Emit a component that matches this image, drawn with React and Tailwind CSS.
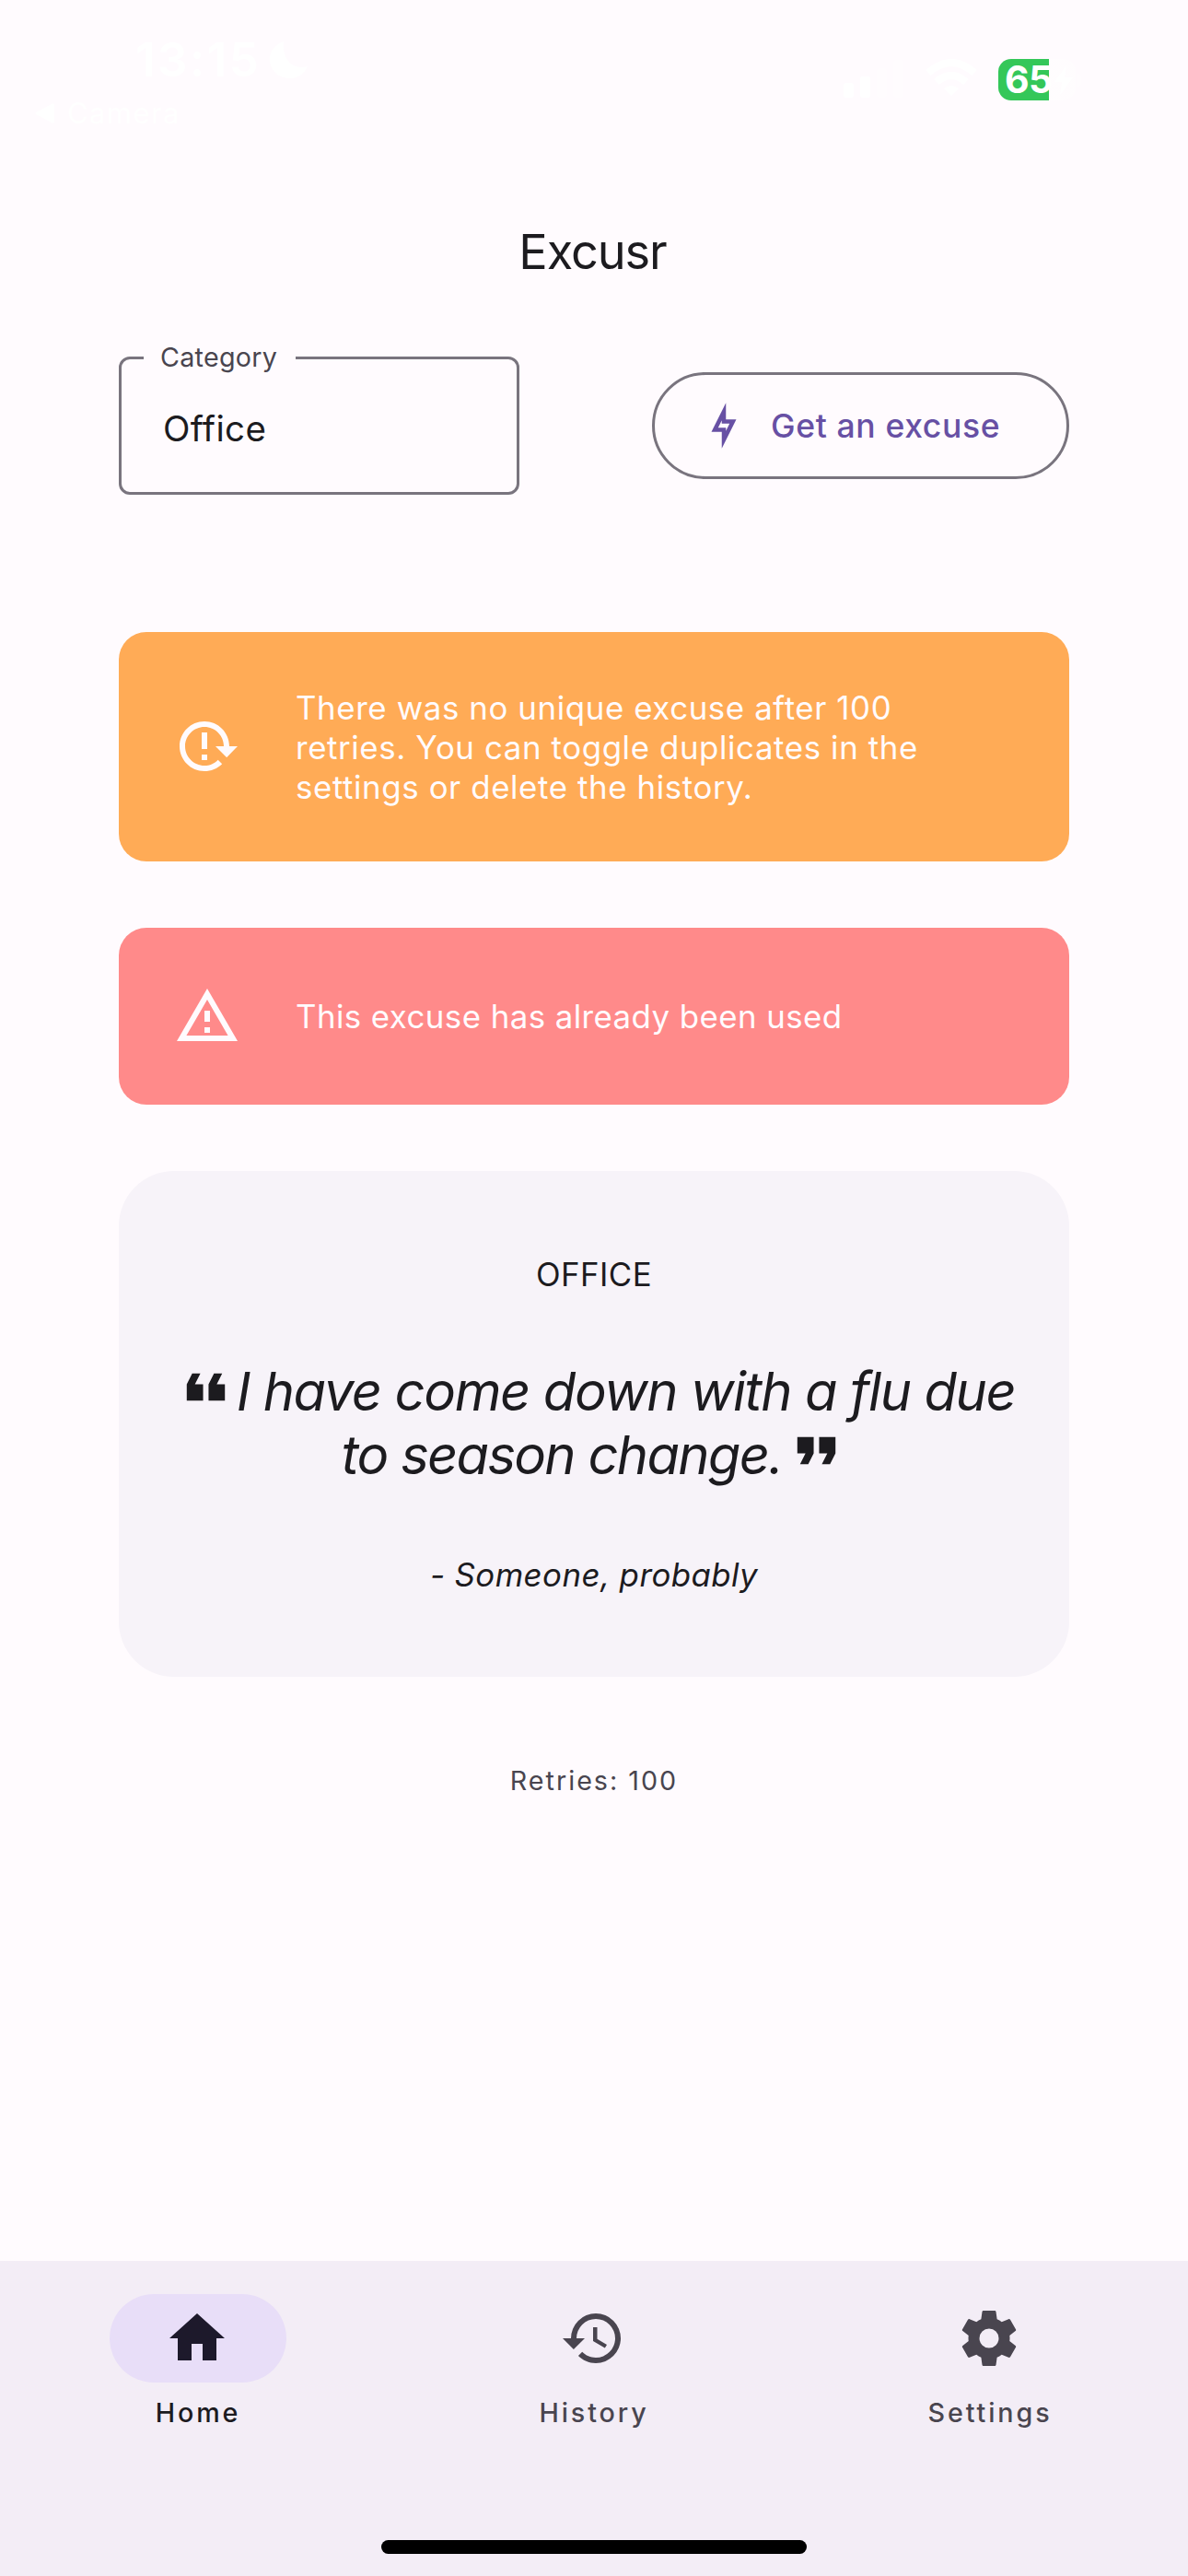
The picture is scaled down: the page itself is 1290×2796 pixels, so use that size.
import React from "react";

function MdIcon({ d, className }) {
  return (
    <svg viewBox="0 0 24 24" fill="currentColor" className={className} aria-hidden="true">
      <path d={d} />
    </svg>
  );
}

const icons = {
  bolt: "M11 9.47V11H14.76L13 14.53V13H9.24L11 9.47M13 1L6 15H11V23L18 9H13V1Z",
  reloadAlert:
    "M11 3C6.03 3 2 7.03 2 12S6.03 21 11 21C13.39 21 15.68 20.06 17.4 18.4L15.9 16.9C14.63 18.25 12.86 19 11 19C7.13 19 4 15.87 4 12S7.13 5 11 5S18 8.13 18 12H15L19 16H19.1L23 12H20C20 7.03 15.97 3 11 3M10 7V13H12V7H10M10 15V17H12V15H10Z",
  alert: "M12 2L1 21H23M12 6L19.53 19H4.47M11 10V14H13V10M11 16V18H13V16",
  quoteOpen: "M10 7L8 11H11V17H5V11L7 7H10M18 7L16 11H19V17H13V11L15 7H18Z",
  quoteClose: "M14 17H17L19 13V7H13V13H16M6 17H9L11 13V7H5V13H8L6 17Z",
  home: "M10 20V14H14V20H19V12H22L12 3L2 12H5V20H10Z",
  history:
    "M13.5 8H12V13L16.28 15.54L17 14.33L13.5 12.25V8M13 3A9 9 0 0 0 4 12H1L4.96 16.03L9 12H6A7 7 0 0 1 13 5A7 7 0 0 1 20 12A7 7 0 0 1 13 19C11.07 19 9.32 18.21 8.06 16.94L6.64 18.36C8.27 20 10.5 21 13 21A9 9 0 0 0 22 12A9 9 0 0 0 13 3",
  cog: "M12 15.5A3.5 3.5 0 0 1 8.5 12A3.5 3.5 0 0 1 12 8.5A3.5 3.5 0 0 1 15.5 12A3.5 3.5 0 0 1 12 15.5M19.43 12.97C19.47 12.65 19.5 12.33 19.5 12C19.5 11.67 19.47 11.34 19.43 11L21.54 9.37C21.73 9.22 21.78 8.95 21.66 8.73L19.66 5.27C19.54 5.05 19.27 4.96 19.05 5.05L16.56 6.05C16.04 5.66 15.5 5.32 14.87 5.07L14.5 2.42C14.46 2.18 14.25 2 14 2H10C9.75 2 9.54 2.18 9.5 2.42L9.13 5.07C8.5 5.32 7.96 5.66 7.44 6.05L4.95 5.05C4.73 4.96 4.46 5.05 4.34 5.27L2.34 8.73C2.21 8.95 2.27 9.22 2.46 9.37L4.57 11C4.53 11.34 4.5 11.67 4.5 12C4.5 12.33 4.53 12.65 4.57 12.97L2.46 14.63C2.27 14.78 2.21 15.05 2.34 15.27L4.34 18.73C4.46 18.95 4.73 19.03 4.95 18.95L7.44 17.94C7.96 18.34 8.5 18.68 9.13 18.93L9.5 21.58C9.54 21.82 9.75 22 10 22H14C14.25 22 14.46 21.82 14.5 21.58L14.87 18.93C15.5 18.67 16.04 18.34 16.56 17.94L19.05 18.95C19.27 19.03 19.54 18.95 19.66 18.73L21.66 15.27C21.78 15.05 21.73 14.78 21.54 14.63L19.43 12.97Z",
};

function StatusBar() {
  return (
    <header className="flex h-[240px] shrink-0 items-start justify-between pr-[116px] pl-[38px] text-white">
      <div className="pt-[35px]">
        <div className="ml-[109px] flex h-[60px] items-center">
          <span className="text-[51px] leading-[60px] font-semibold tracking-[2.5px]">13:15</span>
          <svg viewBox="0 0 42 42" className="ml-[10px] size-[42px]" fill="currentColor">
            <path d="M15 1C13 17 22 33 41 28C37 37 30 41 22 41C9 41 0 32 0 20C0 11 6 4 15 1Z" />
          </svg>
        </div>
        <div className="mt-[8px] flex h-[40px] items-center">
          <svg viewBox="0 0 21 22" className="h-[22px] w-[21px]" fill="currentColor">
            <path d="M1 10Q0 11 1 12L19 21.500Q21 22 21 20V2Q21 0 19 .5Z" />
          </svg>
          <span className="ml-[14px] text-[31px] leading-[40px] tracking-[1.4px]">Camera</span>
        </div>
      </div>
      <div className="flex items-end pt-[64px]">
        <div className="mb-[3px] flex items-end gap-[7px]">
          <div className="h-[16px] w-[11px] rounded-[3px] bg-white" />
          <div className="h-[23px] w-[11px] rounded-[3px] bg-white" />
          <div className="h-[32px] w-[11px] rounded-[3px] bg-white/30" />
          <div className="h-[41px] w-[11px] rounded-[3px] bg-white/30" />
        </div>
        <svg viewBox="0 0 56 42" className="mb-[3px] ml-[24px] h-[42px] w-[56px]" fill="none" stroke="currentColor" strokeWidth="8">
          <path d="M3 15Q28 -7 53 15" />
          <path d="M12 25Q28 11 44 25" />
          <path d="M20 32Q28 26 36 32L28 40Z" fill="currentColor" stroke="none" />
        </svg>
        <div className="ml-[23px] flex h-[45px] items-center">
          <div className="flex h-[45px] w-[84px] items-center rounded-[14px] bg-linear-to-r from-[#34c759] from-[55px] to-white/40 to-[55px] pl-[7px]">
            <span className="text-[41px] leading-[45px] font-bold tracking-[-0.6px]">65</span>
            <svg viewBox="0 0 20 32" className="ml-[2px] h-[32px] w-[20px] shrink-0" fill="currentColor">
              <path d="M13 0L0 18H8L6 32L20 13H11Z" />
            </svg>
          </div>
          <div className="ml-[2px] h-[14px] w-[4px] rounded-r-full bg-white/40" />
        </div>
      </div>
    </header>
  );
}

function CategoryField() {
  return (
    <div className="relative h-[150px] w-[435px] rounded-[12px] border-[3px] border-[#79747e] pt-[51px] pl-[45px]">
      <span className="absolute top-[-20px] left-[24px] w-[165px] bg-[#fffbfe] pl-[18px] text-[28.7px] leading-[36px] tracking-[0.25px] text-[#49454f]">
        Category
      </span>
      <div className="text-[38.5px] leading-[48px] tracking-[0.33px]">Office</div>
    </div>
  );
}

function NavItem({ icon, label, active }) {
  return (
    <div className={active ? "flex w-[430px] flex-col items-center text-[#1c1b1f]" : "flex w-[430px] flex-col items-center text-[#49454f]"}>
      <div
        className={
          active
            ? "flex h-[96px] w-[192px] items-center justify-center rounded-full bg-[#e8def8] pr-[2px] text-[#1d192b]"
            : "flex h-[96px] w-[192px] items-center justify-center pr-[2px]"
        }
      >
        <MdIcon d={icon} className="size-[72px]" />
      </div>
      <span className="mt-[15px] text-[28.7px] leading-[36px] font-medium tracking-[2.9px]">{label}</span>
    </div>
  );
}

export default function App() {
  return (
    <div className="flex h-[2796px] w-[1290px] flex-col overflow-hidden bg-[#fffbfe] font-['Inter',sans-serif] text-[#1c1b1f]">
      <StatusBar />
      <main className="flex flex-1 flex-col px-[129px]">
        <h1 className="pr-[3px] text-center text-[52.3px] leading-[66px] tracking-[-1.1px]">Excusr</h1>

        <div className="mt-[81px] flex items-center justify-between">
          <CategoryField />
          <button className="flex h-[116px] w-[453px] items-center rounded-full border-[3px] border-[#79747e] pl-[48px] text-[#6750a4]">
            <MdIcon d={icons.bolt} className="size-[54px]" />
            <span className="mt-[2px] ml-[24px] text-[35.5px] leading-[48px] font-medium tracking-[0.64px]">Get an excuse</span>
          </button>
        </div>

        <div className="mt-[149px] flex h-[249px] items-center rounded-[30px] bg-[#ffab56] pl-[60px] text-[#fffbfe]">
          <MdIcon d={icons.reloadAlert} className="mb-px size-[72px]" />
          <p className="mt-[2px] ml-[60px] w-[700px] text-[34.8px] leading-[43px] tracking-[0.62px]">
            There was no unique excuse after 100 retries. You can toggle duplicates in the settings or delete the history.
          </p>
        </div>

        <div className="mt-[72px] flex h-[192px] items-center rounded-[30px] bg-[#ff8a8a] pl-[60px] text-[#fffbfe]">
          <MdIcon d={icons.alert} className="size-[72px]" />
          <p className="ml-[60px] text-[34.8px] leading-[43px] tracking-[0.45px]">This excuse has already been used</p>
        </div>

        <section className="mt-[72px] h-[549px] rounded-[60px] bg-[#f7f3f9] pt-[91px] text-center">
          <div className="text-[34.8px] leading-[42px] tracking-[0.47px]">OFFICE</div>
          <blockquote className="mt-[72px] text-[58px] leading-[69px] italic">
            <div className="flex h-[69px] justify-center">
              <MdIcon d={icons.quoteOpen} className="mt-[-6px] mr-[-2px] size-[71px] shrink-0" />
              <span className="tracking-[-1.45px] whitespace-nowrap">I have come down with a flu due</span>
            </div>
            <div className="flex h-[69px] justify-center pl-[3px]">
              <span className="tracking-[-1.75px] whitespace-nowrap">to season change.</span>
              <MdIcon d={icons.quoteClose} className="mt-[-6px] ml-[2px] size-[71px] shrink-0" />
            </div>
          </blockquote>
          <div className="mt-[74px] text-[34.8px] leading-[42px] tracking-[0.45px] italic">- Someone, probably</div>
        </section>

        <div className="mt-[95px] text-center text-[28.7px] leading-[36px] tracking-[2px] text-[#49454f]">Retries: 100</div>
      </main>

      <nav className="flex h-[342px] shrink-0 flex-col items-center bg-[#f3edf6] pt-[36px]">
        <div className="flex">
          <NavItem icon={icons.home} label="Home" active />
          <NavItem icon={icons.history} label="History" />
          <NavItem icon={icons.cog} label="Settings" />
        </div>
        <div className="mt-[120px] h-[15px] w-[462px] rounded-full bg-black" />
      </nav>
    </div>
  );
}
